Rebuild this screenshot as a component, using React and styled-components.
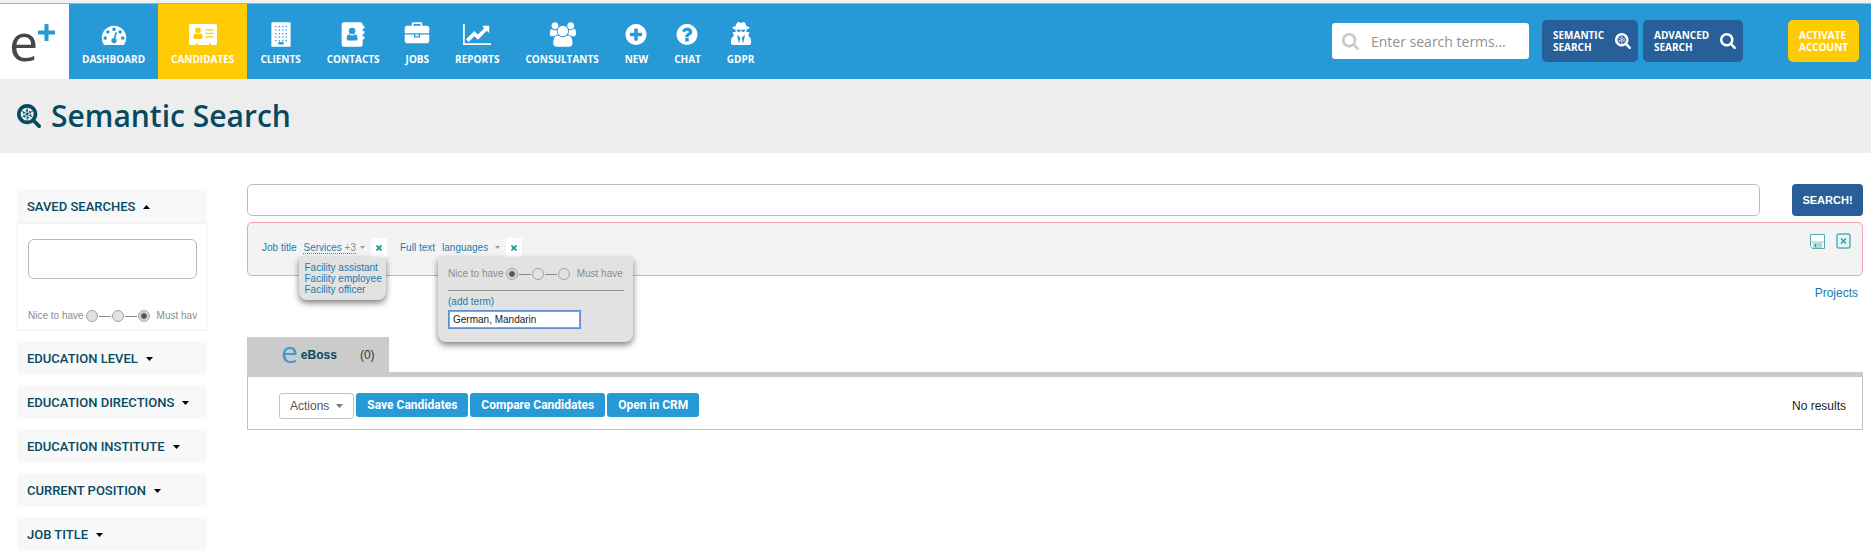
import React, { useId } from "react";
import styled, { createGlobalStyle } from "styled-components";
import { FaUserSecret } from "react-icons/fa";

const c = {
  blue: "#2699d6",
  navy: "#285f99",
  yellow: "#ffcb05",
  petrol: "#054a61",
  link: "#1a7bb0",
  grey: "#8c8c8c",
  tab: "#cbcbcb",
};

const GlobalStyle = createGlobalStyle`
  *, *::before, *::after { box-sizing: border-box; }
  body {
    margin: 0;
    background: #fff;
    color: #222;
    font-family: "Liberation Sans", Arial, sans-serif;
    font-size: 12px;
  }
  button, input { font: inherit; margin: 0; }
  button { cursor: pointer; }
  a { text-decoration: none; }
`;

/* ---------- header ---------- */

const Header = styled.header`
  display: flex;
  align-items: stretch;
  height: 79px;
  border-top: 3px solid #f1f1f1;
  background: ${c.blue};
  box-shadow: inset 0 1px 0 #a9b4ba;
  font-family: "Open Sans", sans-serif;
`;

const Logo = styled.a`
  display: flex;
  align-items: flex-start;
  width: 69px;
  margin-top: 1px;
  padding-left: 9px;
  background: #fff;
  color: #484848;
  font-size: 52px;
  line-height: 73px;
`;

const LogoPlus = styled.svg`
  width: 17px;
  height: 17px;
  margin-top: 20px;
`;

const Nav = styled.nav`
  display: flex;
  margin-top: 1px;
`;

const NavItem = styled.a`
  display: flex;
  flex-direction: column;
  align-items: center;
  gap: 5px;
  padding: 18px 13px 0;
  background: ${(p) => (p.$active ? c.yellow : "transparent")};
  color: #fff;
  font-size: 10px;
  font-weight: 700;
  line-height: 15px;
  white-space: nowrap;
`;

const NavIcon = styled.svg`
  width: 28px;
  height: 25px;
  margin: 0 -4px;
  fill: currentColor;
`;

const SecretIcon = styled(FaUserSecret)`
  width: 28px;
  height: 23px;
  margin: 0 -4px 2px;
`;

const Tools = styled.div`
  display: flex;
  align-items: center;
  margin-left: auto;
  padding-right: 12px;
`;

const TermBox = styled.label`
  display: flex;
  align-items: center;
  gap: 12px;
  width: 197px;
  height: 36px;
  margin-right: 13px;
  padding: 0 10px;
  border-radius: 3px;
  background: #fff;
  color: #c9c9c9;
`;

const TermInput = styled.input`
  flex: 1;
  min-width: 0;
  padding: 0;
  border: 0;
  outline: 0;
  background: transparent;
  font-size: 14px;
  &::placeholder { color: #929292; opacity: 1; }
`;

const ToolButton = styled.button`
  display: flex;
  align-items: center;
  justify-content: space-between;
  width: ${(p) => p.$width}px;
  height: 42px;
  margin-right: ${(p) => p.$after || 0}px;
  padding: 0 7px 0 11px;
  border: 0;
  border-radius: 5px;
  background: ${(p) => (p.$accent ? c.yellow : c.navy)};
  color: #fff;
  font-size: 10px;
  font-weight: 700;
  line-height: 12px;
  text-align: left;
`;

/* ---------- page title ---------- */

const TitleBar = styled.div`
  display: flex;
  align-items: center;
  gap: 10px;
  height: 74px;
  padding: 0 17px;
  background: #ededed;
  color: ${c.petrol};
`;

const Title = styled.h1`
  margin: 0;
  font-family: "Open Sans", sans-serif;
  font-size: 30px;
  font-weight: 600;
  line-height: 40px;
`;

/* ---------- body ---------- */

const Body = styled.div`
  display: grid;
  grid-template-columns: 190px minmax(0, 1fr);
  gap: 40px;
  padding: 31px 8px 4px 17px;
`;

const Sidebar = styled.aside`
  display: flex;
  flex-direction: column;
  gap: 10px;
  padding-top: 5px;
`;

const FilterToggle = styled.button`
  display: flex;
  align-items: center;
  gap: 8px;
  width: 100%;
  height: 34px;
  padding: 0 10px;
  border: 0;
  background: #f8f8f8;
  color: ${c.petrol};
  font-family: Roboto, sans-serif;
  font-size: 13px;
  font-weight: 500;
`;

const Arrow = styled.svg`
  width: 7px;
  height: 4px;
  margin-top: 2px;
  fill: #000;
  transform: ${(p) => (p.$up ? "rotate(180deg)" : "none")};
`;

const FilterBody = styled.div`
  height: 108px;
  padding: 15px 9px 0 10px;
  border: 1px solid #f1f1f1;
  overflow: hidden;
`;

const FilterInput = styled.input`
  display: block;
  width: 100%;
  height: 40px;
  margin-bottom: 30px;
  padding: 0 8px;
  border: 1px solid #b9b9b9;
  border-radius: 6px;
`;

const Scale = styled.div`
  display: flex;
  align-items: center;
  height: 14px;
  overflow: hidden;
  color: ${c.grey};
  font-size: 10px;
  line-height: 14px;
  white-space: nowrap;
`;

const ScaleLabel = styled.label`
  flex: none;
  margin: ${(p) => (p.$end ? "0 0 0 7px" : "0 2px 0 0")};
`;

const ScaleRadio = styled.input`
  flex: none;
  appearance: none;
  width: 12px;
  height: 12px;
  border: 1px solid #a3a3a3;
  border-radius: 50%;
  background: #e2e2e2;
  &:checked {
    background: radial-gradient(circle, #555 0 2px, #e2e2e2 4px);
  }
`;

const ScaleLine = styled.span`
  flex: none;
  width: 12px;
  height: 1px;
  margin: 0 1px;
  background: #8c8c8c;
`;

const Main = styled.main`
  display: flex;
  flex-direction: column;
`;

const SearchRow = styled.form`
  display: flex;
  gap: 32px;
  margin-bottom: 6px;
`;

const QueryInput = styled.input`
  flex: 1;
  min-width: 0;
  height: 32px;
  padding: 0 10px;
  border: 1px solid #bbb;
  border-radius: 5px;
`;

const SearchButton = styled.button`
  width: 71px;
  height: 32px;
  padding: 0;
  border: 0;
  border-radius: 4px;
  background: ${c.navy};
  color: #fff;
  font-size: 11px;
  font-weight: 700;
`;

const QueryPanel = styled.section`
  display: flex;
  align-items: flex-start;
  height: 54px;
  padding: 0 11px 0 14px;
  border: 1px solid #f3a3a9;
  border-radius: 5px;
  background: #f3f3f3;
  color: ${c.link};
  font-size: 10px;
  line-height: 19px;
`;

const Chip = styled.div`
  display: flex;
  align-items: center;
  height: 19px;
  margin: 15px 13px 0 0;
`;

const ChipName = styled.span`
  margin-right: 7px;
`;

const ChipValue = styled.div`
  position: relative;
  display: flex;
  align-items: center;
  gap: 4px;
  height: 19px;
`;

const ChipText = styled.span`
  line-height: 11px;
  border-bottom: 1px ${(p) => (p.$dotted ? "dotted #777" : "solid transparent")};
`;

const More = styled.span`
  color: ${c.grey};
`;

const SmallCaret = styled.svg`
  width: 5px;
  height: 3px;
  fill: #999;
`;

const Remove = styled.button`
  display: grid;
  place-items: center;
  width: 16px;
  height: 19px;
  margin-left: 6px;
  padding: 0;
  border: 0;
  background: #fff;
`;

const Popup = styled.div`
  position: absolute;
  z-index: 2;
  top: 100%;
  left: -4px;
  width: ${(p) => p.$width}px;
  padding: ${(p) => p.$pad};
  border-radius: 3px 3px 8px 8px;
  background: #e2e2e2;
  box-shadow: 0 3px 6px rgba(0, 0, 0, 0.5);
  line-height: 11px;
`;

const TermLink = styled.a`
  display: block;
  color: ${c.link};
  white-space: nowrap;
`;

const Divider = styled.hr`
  height: 1px;
  margin: 9px 0 5px;
  border: 0;
  background: #8f8f8f;
`;

const AddLabel = styled.label`
  display: block;
  margin-bottom: 3px;
`;

const AddInput = styled.input`
  display: block;
  width: 133px;
  height: 19px;
  padding: 0 4px;
  border: 1px solid #5b8fd0;
  outline: 1px solid #7aa7e0;
  outline-offset: -2px;
  background: #fff;
  color: #222;
`;

const PanelActions = styled.div`
  display: flex;
  gap: 11px;
  margin: 10px 0 0 auto;
`;

const IconButton = styled.button`
  display: block;
  padding: 0;
  border: 0;
  background: transparent;
  svg { display: block; }
`;

const ProjectsLink = styled.a`
  align-self: flex-end;
  margin: 9px 5px 0 0;
  color: ${c.link};
  line-height: 16px;
`;

const Results = styled.section`
  margin-top: 36px;
`;

const Tab = styled.button`
  display: flex;
  align-items: center;
  width: 142px;
  height: 35px;
  padding: 0 0 0 34px;
  border: 0;
  background: ${c.tab};
  color: ${c.petrol};
  font-weight: 700;
`;

const TabMark = styled.span`
  margin: -6px 3px 0 0;
  color: #3f97d3;
  font-family: "Open Sans", sans-serif;
  font-size: 30px;
  font-weight: 500;
  line-height: 30px;
`;

const TabCount = styled.span`
  margin-left: 23px;
  color: #333;
  font-weight: 400;
`;

const ResultPanel = styled.div`
  display: flex;
  align-items: flex-start;
  gap: 2px;
  height: 58px;
  padding: 16px 16px 0 31px;
  border: 1px solid #c3c3c3;
  border-top: 5px solid ${c.tab};
`;

const ActionButton = styled.button`
  height: 24px;
  padding: 0 11px;
  border: 0;
  border-radius: 3px;
  background: ${c.blue};
  color: #fff;
  font-family: Roboto, sans-serif;
  font-weight: 700;
  line-height: 24px;
  white-space: nowrap;
`;

const MenuButton = styled.button`
  display: flex;
  align-items: center;
  gap: 7px;
  height: 26px;
  padding: 0 10px;
  border: 1px solid #c4c4c4;
  border-radius: 3px;
  background: #fff;
  color: #555;
`;

const MenuCaret = styled.svg`
  width: 7px;
  height: 4px;
  fill: #777;
`;

const NoResults = styled.p`
  margin: 5px 0 0 auto;
  line-height: 16px;
`;

/* ---------- icons ---------- */

const circle =
  "M1664 896q0 209-103 385.5t-279.5 279.5-385.5 103-385.5-103-279.5-279.5-103-385.5 103-385.5 279.5-279.5 385.5-103 385.5 103 279.5 279.5 103 385.5z";
const windows = [272, 528, 784, 1040].flatMap((x) =>
  [272, 528, 784, 1040, 1296].map((y) => `M${x} ${y}h96v96h-96z`)
);

const icons = {
  dashboard: {
    box: "-128 0 2048 1792",
    d: "M384 1152q0-53-37.5-90.5t-90.5-37.5-90.5 37.5-37.5 90.5 37.5 90.5 90.5 37.5 90.5-37.5 37.5-90.5zm192-448q0-53-37.5-90.5t-90.5-37.5-90.5 37.5-37.5 90.5 37.5 90.5 90.5 37.5 90.5-37.5 37.5-90.5zm428 481l101-382q6-26-7.5-48.5t-38.5-29.5-48 6.5-30 39.5l-101 382q-60 5-107 43.5t-63 98.5q-20 77 20 146t117 89 146-20 89-117q16-60-6-117t-72-91zm660-33q0-53-37.5-90.5t-90.5-37.5-90.5 37.5-37.5 90.5 37.5 90.5 90.5 37.5 90.5-37.5 37.5-90.5zm-640-640q0-53-37.5-90.5t-90.5-37.5-90.5 37.5-37.5 90.5 37.5 90.5 90.5 37.5 90.5-37.5 37.5-90.5zm448 192q0-53-37.5-90.5t-90.5-37.5-90.5 37.5-37.5 90.5 37.5 90.5 90.5 37.5 90.5-37.5 37.5-90.5zm320 448q0 261-141 483-19 29-54 29h-1402q-35 0-54-29-141-221-141-483 0-182 71-348t191-286 286-191 348-71 348 71 286 191 191 286 71 348z",
  },
  card: {
    box: "0 0 2048 1792",
    d: "M112 128h1824q112 0 112 112v1312q0 112-112 112h-352v-96q0-32-32-32h-64q-32 0-32 32v96h-832v-96q0-32-32-32h-64q-32 0-32 32v96h-384q-112 0-112-112v-1312q0-112 112-112zM656 384a208 208 0 1 0 0 416a208 208 0 1 0 0-416zM480 800q-160 40-160 290q0 130 110 130h460q110 0 110-130q0-250-160-290q-80 84-180 84t-180-84zM1216 512v90h576v-90zM1216 768v90h576v-90zM1216 1024v90h576v-90z",
  },
  building: {
    box: "-320 0 2048 1792",
    d: `M64 0h1280q64 0 64 64v1664q0 64-64 64h-1280q-64 0-64-64v-1664q0-64 64-64zM512 1440v192h384v-192z${windows.join("")}`,
  },
  book: {
    box: "-192 0 2048 1792",
    d: "M160 0h1216q160 0 160 160v96h96q32 0 32 32v160q0 32-32 32h-96v160h96q32 0 32 32v160q0 32-32 32h-96v160h96q32 0 32 32v160q0 32-32 32h-96v384q0 160-160 160h-1216q-160 0-160-160v-1472q0-160 160-160zM768 400a240 240 0 1 0 0 480a240 240 0 1 0 0-480zM560 880q-190 20-190 340q0 120 120 120h556q120 0 120-120q0-320-190-340q-90 96-208 96t-208-96z",
  },
  briefcase: {
    box: "-128 0 2048 1792",
    d: "M640 256h512v-128h-512v128zm1152 640v480q0 66-47 113t-113 47h-1472q-66 0-113-47t-47-113v-480h672v160q0 26 19 45t45 19h320q26 0 45-19t19-45v-160h672zm-768 0v128h-256v-128h256zm768-480v384h-1792v-384q0-66 47-113t113-47h352v-160q0-40 28-68t68-28h576q40 0 68 28t28 68v160h352q66 0 113 47t47 113z",
  },
  chart: {
    box: "0 0 2048 1792",
    d: "M2048 1536v128h-2048v-1536h128v1408h1920zm-128-1248v435q0 21-19.5 29.5t-35.5-7.5l-121-121-633 633q-10 10-23 10t-23-10l-233-233-416 416-192-192 585-585q10-10 23-10t23 10l233 233 464-464-121-121q-16-16-7.5-35.5t29.5-19.5h435q14 0 23 9t9 23z",
  },
  users: {
    box: "-64 0 2048 1792",
    d: "M657 896q-162 5-265 128h-134q-82 0-138-40.5t-56-118.5q0-353 124-353 6 0 43.5 21t97.5 42.5 119 21.5q67 0 133-23-5 37-5 66 0 159 90 287zm1071 637q0 120-73 189.5t-194 69.5h-874q-121 0-194-69.5t-73-189.5q0-53 3.5-103.5t14-109 26.5-108.5 43-97.5 62-81 85.5-53.5 111.5-20q10 0 43 21.5t73 48 107 48 135 21.5 135-21.5 107-48 73-48 43-21.5q61 0 111.5 20t85.5 53.5 62 81 43 97.5 26.5 108.5 14 109 3.5 103.5zm-1024-1277q0 106-75 181t-181 75-181-75-75-181 75-181 181-75 181 75 75 181zm704 384q0 159-112.5 271.5t-271.5 112.5-271.5-112.5-112.5-271.5 112.5-271.5 271.5-112.5 271.5 112.5 112.5 271.5zm576 225q0 78-56 118.5t-138 40.5h-134q-103-123-265-128 90-128 90-287 0-29-5-66 66 23 133 23 59 0 119-21.5t97.5-42.5 43.5-21q124 0 124 353zm-128-609q0 106-75 181t-181 75-181-75-75-181 75-181 181-75 181 75 75 181z",
  },
  plus: {
    box: "-128 0 2048 1792",
    d: `${circle}M1344 960v-128q0-26-19-45t-45-19h-256v-256q0-26-19-45t-45-19h-128q-26 0-45 19t-19 45v256h-256q-26 0-45 19t-19 45v128q0 26 19 45t45 19h256v256q0 26 19 45t45 19h128q26 0 45-19t19-45v-256h256q26 0 45-19t19-45z`,
  },
  question: {
    box: "-128 0 2048 1792",
    d: `${circle}M1024 1376v-192q0-14-9-23t-23-9h-192q-14 0-23 9t-9 23v192q0 14 9 23t23 9h192q14 0 23-9t9-23zm256-672q0-88-55.5-163t-138.5-116-170-41q-243 0-371 213-15 24 8 42l132 100q7 6 19 6 16 0 25-12 53-68 86-92 34-24 86-24 48 0 85.5 26t37.5 59q0 38-20 61t-68 45q-63 28-115.5 86.5t-52.5 125.5v36q0 14 9 23t23 9h192q14 0 23-9t9-23q0-19 21.5-49.5t54.5-49.5q32-18 49-28.5t46-35 44.5-48 28-60.5 12.5-81z`,
  },
};

const searchPath =
  "M1216 832q0-185-131.5-316.5t-316.5-131.5-316.5 131.5-131.5 316.5 131.5 316.5 316.5 131.5 316.5-131.5 131.5-316.5zm512 832q0 52-38 90t-90 38q-54 0-90-38l-343-342q-179 124-399 124-143 0-273.5-55.5t-225-150-150-225-55.5-273.5 55.5-273.5 150-225 225-150 273.5-55.5 273.5 55.5 225 150 150 225 55.5 273.5q0 220-124 399l343 343q37 37 37 90z";

function SearchIcon({ size, semantic }) {
  return (
    <svg width={size} height={size} viewBox="64 128 1664 1664" fill="currentColor" aria-hidden="true">
      <path d={searchPath} />
      {semantic && (
        <g fill="none" stroke="currentColor" strokeWidth="56">
          <path d="M768 384v896M380 608l776 448M380 1056l776-448" />
          <circle cx="768" cy="832" r="250" strokeWidth="90" strokeDasharray="150 112" />
        </g>
      )}
    </svg>
  );
}

const Triangle = "M0 0h7L3.5 4z";

function Cross() {
  return (
    <svg width="6" height="6" viewBox="0 0 6 6" aria-hidden="true">
      <path d="M.5.5l5 5M5.500.5l-5 5" stroke="#0f958a" strokeWidth="1.600" />
    </svg>
  );
}

/* ---------- pieces ---------- */

const navItems = [
  ["DASHBOARD", "dashboard"],
  ["CANDIDATES", "card"],
  ["CLIENTS", "building"],
  ["CONTACTS", "book"],
  ["JOBS", "briefcase"],
  ["REPORTS", "chart"],
  ["CONSULTANTS", "users"],
  ["NEW", "plus"],
  ["CHAT", "question"],
  ["GDPR", "secret"],
];

const filters = [
  "EDUCATION LEVEL",
  "EDUCATION DIRECTIONS",
  "EDUCATION INSTITUTE",
  "CURRENT POSITION",
  "JOB TITLE",
];

function Importance({ value }) {
  const id = useId();
  const radio = (n, extra) => (
    <ScaleRadio type="radio" name={id} id={`${id}-${n}`} defaultChecked={value === n} {...extra} />
  );
  return (
    <Scale role="radiogroup" aria-label="Importance">
      <ScaleLabel htmlFor={`${id}-0`}>Nice to have</ScaleLabel>
      {radio(0)}
      <ScaleLine />
      {radio(1, { "aria-label": "Neutral" })}
      <ScaleLine />
      {radio(2)}
      <ScaleLabel $end htmlFor={`${id}-2`}>Must have</ScaleLabel>
    </Scale>
  );
}

function QueryChip({ name, value, more, popup }) {
  return (
    <Chip>
      <ChipName>{name}</ChipName>
      <ChipValue>
        <ChipText $dotted={Boolean(more)}>
          {value}
          {more && <More> {more}</More>}
        </ChipText>
        <SmallCaret viewBox="0 0 5 3" aria-hidden="true">
          <path d="M0 0h5L2.500 3z" />
        </SmallCaret>
        {popup}
      </ChipValue>
      <Remove type="button" aria-label={`Remove ${name}`}>
        <Cross />
      </Remove>
    </Chip>
  );
}

export default function App() {
  return (
    <>
      <GlobalStyle />
      <Header>
        <Logo href="#">
          e
          <LogoPlus viewBox="0 0 17 17" aria-hidden="true">
            <path d="M8.500 0v17M0 8.500h17" stroke={c.blue} strokeWidth="4" />
          </LogoPlus>
        </Logo>
        <Nav>
          {navItems.map(([label, icon]) => (
            <NavItem key={label} href="#" $active={label === "CANDIDATES"}>
              {icon === "secret" ? (
                <SecretIcon />
              ) : (
                <NavIcon viewBox={icons[icon].box} aria-hidden="true">
                  <path fillRule="evenodd" d={icons[icon].d} />
                </NavIcon>
              )}
              {label}
            </NavItem>
          ))}
        </Nav>
        <Tools>
          <TermBox>
            <SearchIcon size={17} />
            <TermInput type="text" placeholder="Enter search terms..." aria-label="Search terms" />
          </TermBox>
          <ToolButton type="button" $width={96} $after={5}>
            <span>SEMANTIC<br />SEARCH</span>
            <SearchIcon size={16} semantic />
          </ToolButton>
          <ToolButton type="button" $width={100} $after={45}>
            <span>ADVANCED<br />SEARCH</span>
            <SearchIcon size={16} />
          </ToolButton>
          <ToolButton type="button" $accent $width={71}>
            <span>ACTIVATE<br />ACCOUNT</span>
          </ToolButton>
        </Tools>
      </Header>

      <TitleBar>
        <SearchIcon size={24} semantic />
        <Title>Semantic Search</Title>
      </TitleBar>

      <Body>
        <Sidebar>
          <section>
            <FilterToggle type="button" aria-expanded="true">
              SAVED SEARCHES
              <Arrow $up viewBox="0 0 7 4" aria-hidden="true"><path d={Triangle} /></Arrow>
            </FilterToggle>
            <FilterBody>
              <FilterInput type="text" aria-label="Saved searches" />
              <Importance value={2} />
            </FilterBody>
          </section>
          {filters.map((name) => (
            <FilterToggle key={name} type="button" aria-expanded="false">
              {name}
              <Arrow viewBox="0 0 7 4" aria-hidden="true"><path d={Triangle} /></Arrow>
            </FilterToggle>
          ))}
        </Sidebar>

        <Main>
          <SearchRow onSubmit={(e) => e.preventDefault()}>
            <QueryInput type="text" aria-label="Query" />
            <SearchButton type="submit">SEARCH!</SearchButton>
          </SearchRow>

          <QueryPanel>
            <QueryChip
              name="Job title"
              value="Services"
              more="+3"
              popup={
                <Popup $width={87} $pad="5px">
                  <TermLink href="#">Facility assistant</TermLink>
                  <TermLink href="#">Facility employee</TermLink>
                  <TermLink href="#">Facility officer</TermLink>
                </Popup>
              }
            />
            <QueryChip
              name="Full text"
              value={"languages\u00a0"}
              popup={
                <Popup $width={195} $pad="10px 9px 13px 10px">
                  <Importance value={0} />
                  <Divider />
                  <AddLabel htmlFor="add-term">(add term)</AddLabel>
                  <AddInput id="add-term" type="text" defaultValue="German, Mandarin" />
                </Popup>
              }
            />
            <PanelActions>
              <IconButton type="button" aria-label="Save query">
                <svg width="15" height="16" viewBox="0 0 15 16">
                  <path d="M.5 1.500h14v14h-12l-2-2z" fill="#fff" stroke="#5aa9ab" />
                  <path d="M1 8h13v2h-13z" fill="#c3e4e6" />
                  <path d="M3 10h9v5h-9z" fill="#a9d6d9" />
                  <path d="M5 11h1v3h-1z" fill="#3d8e91" />
                </svg>
              </IconButton>
              <IconButton type="button" aria-label="Clear query">
                <svg width="15" height="16" viewBox="0 0 15 16">
                  <rect x="1" y="1" width="13" height="14" rx="2" fill="#e6f6f7" stroke="#55b0b4" strokeWidth="1.500" />
                  <path d="M5 5.500l5 5M10 5.500l-5 5" stroke="#3a9ca0" strokeWidth="1.500" />
                </svg>
              </IconButton>
            </PanelActions>
          </QueryPanel>

          <ProjectsLink href="#">Projects</ProjectsLink>

          <Results>
            <Tab type="button">
              <TabMark aria-hidden="true">e</TabMark>
              eBoss
              <TabCount>(0)</TabCount>
            </Tab>
            <ResultPanel>
              <MenuButton type="button" aria-haspopup="menu">
                Actions
                <MenuCaret viewBox="0 0 7 4" aria-hidden="true"><path d={Triangle} /></MenuCaret>
              </MenuButton>
              <ActionButton type="button">Save Candidates</ActionButton>
              <ActionButton type="button">Compare Candidates</ActionButton>
              <ActionButton type="button">Open in CRM</ActionButton>
              <NoResults>No results</NoResults>
            </ResultPanel>
          </Results>
        </Main>
      </Body>
    </>
  );
}
